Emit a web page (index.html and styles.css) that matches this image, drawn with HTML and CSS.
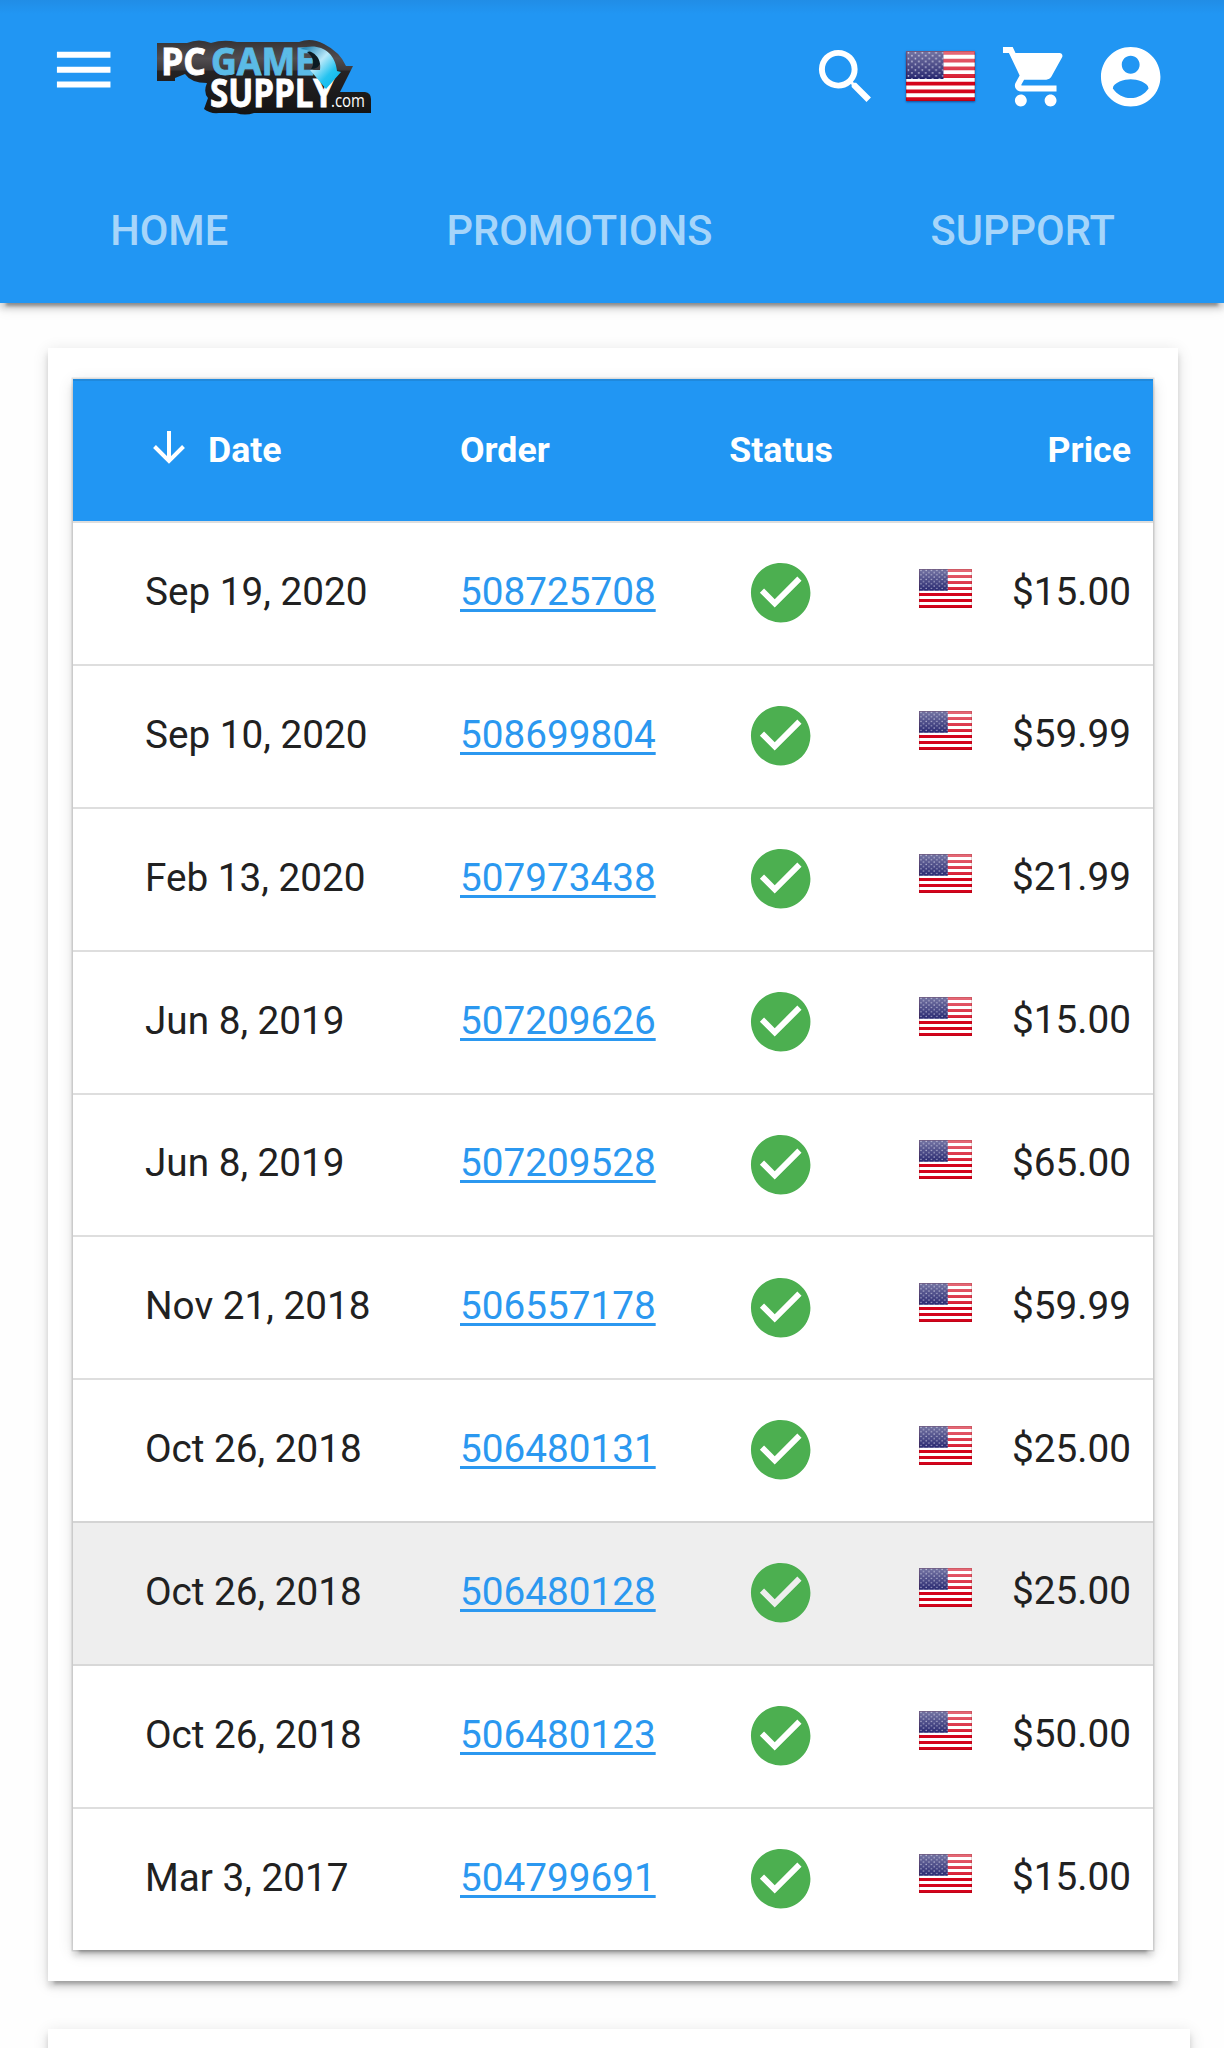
FILE: index.html
```
<!DOCTYPE html>
<html lang="en">
<head>
<meta charset="utf-8">
<title>PC Game Supply – Orders</title>
<link rel="stylesheet" href="styles.css">
</head>
<body>
<svg class="sprite" aria-hidden="true">
  <defs>
    <linearGradient id="gloss" x1="0" y1="0" x2="0" y2="1">
      <stop offset="0" stop-color="#fff" stop-opacity=".42"/>
      <stop offset=".5" stop-color="#fff" stop-opacity=".14"/>
      <stop offset=".6" stop-color="#fff" stop-opacity="0"/>
    </linearGradient>
    <pattern id="stars" width="7" height="6" patternUnits="userSpaceOnUse">
      <circle cx="2.5" cy="1.8" r=".9" fill="#b9b9d8"/>
      <circle cx="6" cy="4.8" r=".9" fill="#b9b9d8"/>
    </pattern>
    <symbol id="flag" viewBox="0 0 70 52" preserveAspectRatio="none">
      <path fill="#fff" d="M0 0h70v52H0z"/>
      <path stroke="#d4041c" stroke-width="4" d="M0 2h70M0 10h70M0 18h70M0 26h70M0 34h70M0 42h70M0 50h70"/>
      <path fill="#101060" d="M0 0h38v29H0z"/>
      <path fill="url(#stars)" d="M0 0h38v29H0z"/>
      <path fill="url(#gloss)" d="M0 0h70v52H0z"/>
      <path fill="none" stroke="#600" stroke-opacity=".25" d="M.5.5h69v51H.5z"/>
    </symbol>
    <symbol id="check" viewBox="0 0 24 24">
      <path d="M12 2C6.480 2 2 6.480 2 12s4.480 10 10 10 10-4.480 10-10S17.520 2 12 2zm-2 15l-5-5 1.410-1.410L10 14.170l7.590-7.590L19 8l-9 9z"/>
    </symbol>
  </defs>
</svg>

<header class="header">
  <div class="toolbar">
    <svg class="icon menu" viewBox="0 0 24 24"><path d="M3 18h18v-2H3v2zm0-5h18v-2H3v2zm0-7v2h18V6H3z"/></svg>
    <svg class="logo" viewBox="0 0 214 74">
      <defs>
        <linearGradient id="plate" x1="0" y1="0" x2="0" y2="1">
          <stop offset="0" stop-color="#343233"/><stop offset=".25" stop-color="#514d50"/>
          <stop offset=".4" stop-color="#3c393b"/><stop offset=".42" stop-color="#252324"/><stop offset="1" stop-color="#141414"/>
        </linearGradient>
        <linearGradient id="swoosh" x1="0" y1="0" x2="1" y2="1">
          <stop offset="0" stop-color="#0872a8"/><stop offset=".42" stop-color="#b9e9fa"/><stop offset=".68" stop-color="#25c3f0"/><stop offset="1" stop-color="#00b4ec"/>
        </linearGradient>
      </defs>
      <path fill="url(#plate)" d="M0 3H30Q42-2 54 3Q66-1 80 2H142Q154-3 167 4Q183 12 189 26H196L183 52H208Q214 53 214 59V73H97Q88 76 79 73H62Q53 74 47 69L51 58Q46 52 50 43Q34 43 28 34L18 38V41H0Z"/>
      <g class="logo-text">
        <text class="white" x="4" y="35" font-size="37.500" textLength="45" lengthAdjust="spacingAndGlyphs">PC</text>
        <text class="sky" x="54" y="35" font-size="37.500" textLength="104" lengthAdjust="spacingAndGlyphs">GAME</text>
        <text class="white" x="53" y="66.500" font-size="38.500" textLength="124" lengthAdjust="spacingAndGlyphs">SUPPLY</text>
        <text class="logo-com" x="174" y="66.500" font-size="19" textLength="34" lengthAdjust="spacingAndGlyphs">.com</text>
      </g>
      <path fill="#0b1b22" d="M150 12Q163 8 164 20Q163 29 154 29Q160 20 150 12Z"/>
      <path fill="url(#swoosh)" d="M143 9C160 2 178 10 180 31L184 32L169 49L153 30L163 30C165 18 157 10 143 9Z"/>
    </svg>
    <div class="actions">
      <svg class="icon" viewBox="0 0 24 24"><path d="M15.500 14h-.79l-.28-.27A6.471 6.471 0 0 0 16 9.500 6.500 6.500 0 1 0 9.500 16c1.610 0 3.090-.59 4.230-1.570l.27.280v.79l5 4.990L20.490 19l-4.990-5zm-6 0C7.010 14 5 11.990 5 9.500S7.010 5 9.500 5 14 7.010 14 9.500 11.990 14 9.500 14z"/></svg>
      <svg class="flag-lg"><use href="#flag"/></svg>
      <svg class="icon" viewBox="0 0 24 24"><path d="M7 18c-1.100 0-1.990.9-1.990 2S5.900 22 7 22s2-.9 2-2-.9-2-2-2zM1 2v2h2l3.600 7.590-1.350 2.450c-.16.28-.25.61-.25.960 0 1.100.9 2 2 2h12v-2H7.420c-.14 0-.25-.11-.25-.25l.03-.12.900-1.630h7.450c.75 0 1.410-.41 1.750-1.030l3.580-6.490c.08-.14.120-.31.120-.480 0-.55-.45-1-1-1H5.210l-.94-2H1zm16 16c-1.100 0-1.990.9-1.990 2s.890 2 1.990 2 2-.9 2-2-.9-2-2-2z"/></svg>
      <svg class="icon account" viewBox="0 0 24 24"><path d="M12 2C6.480 2 2 6.480 2 12s4.480 10 10 10 10-4.480 10-10S17.520 2 12 2zm0 3c1.660 0 3 1.340 3 3s-1.340 3-3 3-3-1.340-3-3 1.340-3 3-3zm0 14.200c-2.500 0-4.710-1.280-6-3.220.03-1.990 4-3.080 6-3.080 1.990 0 5.970 1.090 6 3.080-1.290 1.940-3.500 3.220-6 3.220z"/></svg>
    </div>
  </div>
  <nav class="nav"><a>HOME</a><a>PROMOTIONS</a><a>SUPPORT</a></nav>
</header>

<main class="content">
  <section class="card orders">
    <div class="table">
      <div class="row head">
        <span class="sorted"><svg class="arrow" viewBox="0 0 32 34"><path d="M16 0V30M1.500 15.500L16 30L30.500 15.500"/></svg>Date</span>
        <span>Order</span><span class="status">Status</span><span class="price">Price</span>
      </div>
      <div class="row"><span>Sep 19, 2020</span><a>508725708</a><svg class="check"><use href="#check"/></svg><span class="price"><svg class="flag"><use href="#flag"/></svg>$15.00</span></div>
      <div class="row"><span>Sep 10, 2020</span><a>508699804</a><svg class="check"><use href="#check"/></svg><span class="price"><svg class="flag"><use href="#flag"/></svg>$59.99</span></div>
      <div class="row"><span>Feb 13, 2020</span><a>507973438</a><svg class="check"><use href="#check"/></svg><span class="price"><svg class="flag"><use href="#flag"/></svg>$21.99</span></div>
      <div class="row"><span>Jun 8, 2019</span><a>507209626</a><svg class="check"><use href="#check"/></svg><span class="price"><svg class="flag"><use href="#flag"/></svg>$15.00</span></div>
      <div class="row"><span>Jun 8, 2019</span><a>507209528</a><svg class="check"><use href="#check"/></svg><span class="price"><svg class="flag"><use href="#flag"/></svg>$65.00</span></div>
      <div class="row"><span>Nov 21, 2018</span><a>506557178</a><svg class="check"><use href="#check"/></svg><span class="price"><svg class="flag"><use href="#flag"/></svg>$59.99</span></div>
      <div class="row"><span>Oct 26, 2018</span><a>506480131</a><svg class="check"><use href="#check"/></svg><span class="price"><svg class="flag"><use href="#flag"/></svg>$25.00</span></div>
      <div class="row active"><span>Oct 26, 2018</span><a>506480128</a><svg class="check"><use href="#check"/></svg><span class="price"><svg class="flag"><use href="#flag"/></svg>$25.00</span></div>
      <div class="row"><span>Oct 26, 2018</span><a>506480123</a><svg class="check"><use href="#check"/></svg><span class="price"><svg class="flag"><use href="#flag"/></svg>$50.00</span></div>
      <div class="row"><span>Mar 3, 2017</span><a>504799691</a><svg class="check"><use href="#check"/></svg><span class="price"><svg class="flag"><use href="#flag"/></svg>$15.00</span></div>
    </div>
  </section>
  <section class="card next"></section>
</main>
</body>
</html>
```

FILE: styles.css
```
* { box-sizing: border-box; }
body {
  margin: 0;
  height: 2048px;
  overflow: hidden;
  background: #fefefe;
  color: #212121;
  font-family: Roboto, sans-serif;
  font-size: 38.7px;
}
svg { display: block; flex: none; }
.sprite { position: absolute; width: 0; height: 0; }

.header {
  height: 303px;
  background: linear-gradient(#218de6, #2196f3 14px);
  box-shadow: 0 6px 6px rgba(0,0,0,.14), 0 9px 3px -6px rgba(0,0,0,.3), 0 3px 15px rgba(0,0,0,.12);
}
.toolbar { display: flex; align-items: flex-start; height: 160px; padding: 33px 58px 0 47px; }
.icon { width: 71.4px; height: 71.4px; fill: #fff; }
.menu { margin: .5px -.5px 0 .5px; }
.logo { width: 214px; height: 74px; margin: 7px 0 0 39px; overflow: visible; }
.logo-text { font-family: "Open Sans", sans-serif; font-weight: 700; }
.white { fill: #fff; stroke: #fff; stroke-width: .9; }
.sky { fill: #5bbbe6; stroke: #5bbbe6; stroke-width: .9; }
.logo-com { fill: #fff; font-weight: 400; }
.actions { display: flex; align-items: flex-start; margin: 8px 0 0 auto; }
.flag-lg { width: 69px; height: 50px; margin: 10px 25px 0 25px; box-shadow: 0 1px 2px rgba(0,0,60,.5); }
.account { margin-left: 23px; }

.nav {
  display: flex;
  justify-content: space-around;
  height: 141px;
  padding-left: 1px;
  align-items: center;
  color: #a6d5fa;
  font-size: 41.6px;
  font-weight: 500;
}

.content { padding: 45px 34px 0 48px; }
.card { background: #fff; box-shadow: 0 6px 6px rgba(0,0,0,.14), 0 9px 3px -6px rgba(0,0,0,.2), 0 3px 15px rgba(0,0,0,.12); }
.orders { width: 1130px; height: 1633px; padding: 31px 25px 0 24.5px; }
.next { height: 100px; margin-top: 48px; }

.table {
  box-shadow: 0 6px 6px rgba(0,0,0,.14), 0 9px 3px -6px rgba(0,0,0,.2), 0 3px 15px rgba(0,0,0,.12), 0 0 0 1.5px rgba(0,0,0,.1);
}
.row {
  display: grid;
  grid-template-columns: 315px 270px 102px 1fr;
  align-items: center;
  height: 142.84px;
  padding: 0 22px 4px 72.5px;
  background: #fff;
  border-top: 2px solid #dedede;
}
.row.active { background: #eee; border-color: #d4d4d4; }
.row.active + .row { border-color: #d8d8d8; }
.row:last-child { height: 143.5px; }
.row a {
  color: #2b98f0;
  text-decoration: underline;
  text-decoration-thickness: 3px;
  text-underline-offset: 4px;
}
.row.head {
  height: 142.2px;
  padding-bottom: 3px;
  background: #2196f3;
  color: #fff;
  font-size: 35.7px;
  font-weight: 700;
  border-top-color: #2089dc;
}
.sorted { display: flex; align-items: center; padding-left: 8px; }
.arrow { width: 32px; height: 34px; margin: -4px 23px 0 0; fill: none; stroke: #fff; stroke-width: 4; }
.status { justify-self: center; }
.check { width: 71.4px; height: 71.4px; justify-self: center; margin-top: 3px; fill: #4caf50; }
.price { display: flex; align-items: center; justify-content: flex-end; }
.row:not(.head) .price { margin-top: -1px; }
.flag { width: 53px; height: 39px; margin: -6px auto 0 87px; }
```
